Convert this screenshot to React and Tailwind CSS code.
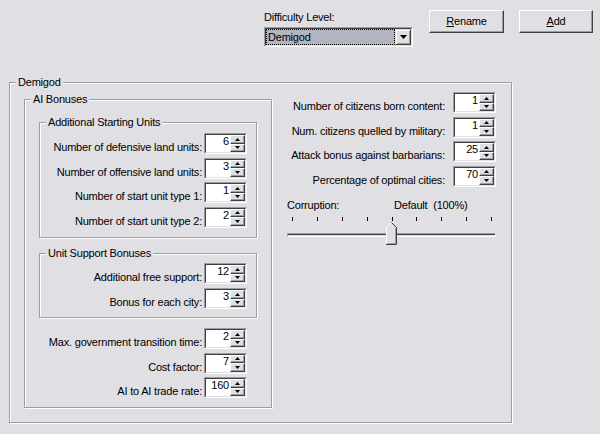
import React from "react";

function Arrow({ up }) {
  return (
    <svg width="5" height="3" viewBox="0 0 5 3" className="block">
      {up ? (
        <polygon points="2.5,0 5,3 0,3" fill="#000" />
      ) : (
        <polygon points="0,0 5,0 2.5,3" fill="#000" />
      )}
    </svg>
  );
}

function SpinBtn({ up }) {
  return (
    <div className="flex flex-1 items-center justify-center border border-t-white border-l-white border-b-[#404040] border-r-[#404040] bg-[#e0dfe3] shadow-[inset_-1px_-1px_0_#9d9da1]">
      <Arrow up={up} />
    </div>
  );
}

function Spin({ v }) {
  return (
    <div className="flex h-[21px] w-[43px] shrink-0 border border-t-[#9d9da1] border-l-[#9d9da1] border-b-white border-r-white">
      <div className="flex flex-1 border border-t-[#404040] border-l-[#404040] border-b-[#e0dfe3] border-r-[#e0dfe3] bg-white">
        <div className="flex-1 pr-[1px] pt-[1px] text-right leading-[11px]">{v}</div>
        <div className="flex w-[15px] flex-col">
          <SpinBtn up />
          <SpinBtn />
        </div>
      </div>
    </div>
  );
}

function Row({ label, v, gapClass }) {
  return (
    <div className={"flex h-[21px] items-end justify-end " + gapClass}>
      <span className="whitespace-nowrap leading-[13px]">{label}</span>
      <Spin v={v} />
    </div>
  );
}

function Legend({ children }) {
  return (
    <legend className="ml-[6px] bg-[#e0dfe3] px-[2px] leading-[13px]">{children}</legend>
  );
}

function Button({ children, className }) {
  return (
    <div
      className={
        "flex h-[23px] items-center justify-center border border-t-white border-l-white border-b-[#404040] border-r-[#404040] bg-[#e0dfe3] shadow-[inset_-1px_-1px_0_#9d9da1] " +
        className
      }
    >
      <span className="leading-[13px]">{children}</span>
    </div>
  );
}

export default function App() {
  const ticks = [0, 1, 2, 3, 4, 5, 6, 7, 8];
  return (
    <div className="h-[434px] w-[600px] overflow-hidden bg-[#e0dfe3] font-['Liberation_Sans',Arial,sans-serif] text-[11px] tracking-[-0.2px] text-black">
      {/* Top area */}
      <div className="flex h-[76px] pl-[264px] pt-[10px]">
        <div className="flex w-[149px] flex-col">
          <div className="mt-[1px] leading-[13px]">Difficulty Level:</div>
          <div className="mt-[3px] flex h-[20px] border border-t-[#9d9da1] border-l-[#9d9da1] border-b-white border-r-white">
            <div className="flex flex-1 border border-t-[#404040] border-l-[#404040] border-b-[#e0dfe3] border-r-[#e0dfe3] bg-white">
              <div className="flex flex-1 items-center border border-dotted border-black bg-[#b2b4c2] pl-[1px]">
                <span className="leading-[13px]">Demigod</span>
              </div>
              <div className="flex w-[16px] items-center justify-center border border-t-[#e0dfe3] border-l-[#e0dfe3] border-b-[#404040] border-r-[#404040] bg-[#e0dfe3] shadow-[inset_1px_1px_0_#fff,inset_-1px_-1px_0_#9d9da1]">
                <svg width="7" height="4" viewBox="0 0 7 4" className="block">
                  <polygon points="0,0 7,0 3.5,4" fill="#000" />
                </svg>
              </div>
            </div>
          </div>
        </div>
        <Button className="ml-[16px] w-[75px]">
          <span className="underline">R</span>ename
        </Button>
        <Button className="ml-[15px] w-[74px]">
          <span className="underline">A</span>dd
        </Button>
      </div>

      {/* Demigod group */}
      <fieldset className="ml-[9px] w-[503px] border border-[#9d9da1] shadow-[inset_1px_1px_0_#fff,1px_1px_0_#fff]">
        <Legend>Demigod</Legend>
        <div className="flex items-start pb-[14px] pl-[14px]">
          {/* AI Bonuses */}
          <fieldset className="mt-[4px] w-[248px] border border-[#9d9da1] shadow-[inset_1px_1px_0_#fff,1px_1px_0_#fff]">
            <Legend>AI Bonuses</Legend>
            <div className="flex flex-col pb-[9px] pl-[14px]">
              <fieldset className="mt-[10px] w-[218px] border border-[#9d9da1] shadow-[inset_1px_1px_0_#fff,1px_1px_0_#fff]">
                <Legend>Additional Starting Units</Legend>
                <div className="flex flex-col gap-[3.5px] pb-[9px] pr-[9px] pt-[4px]">
                  <Row label="Number of defensive land units:" v="6" gapClass="gap-[2px]" />
                  <Row label="Number of offensive land units:" v="3" gapClass="gap-[2px]" />
                  <Row label="Number of start unit type 1:" v="1" gapClass="gap-[2px]" />
                  <Row label="Number of start unit type 2:" v="2" gapClass="gap-[2px]" />
                </div>
              </fieldset>
              <fieldset className="mt-[9px] w-[218px] border border-[#9d9da1] shadow-[inset_1px_1px_0_#fff,1px_1px_0_#fff]">
                <Legend>Unit Support Bonuses</Legend>
                <div className="flex flex-col gap-[4px] pb-[8px] pr-[9px] pt-[3.5px]">
                  <Row label="Additional free support:" v="12" gapClass="gap-[2px]" />
                  <Row label="Bonus for each city:" v="3" gapClass="gap-[2px]" />
                </div>
              </fieldset>
              <div className="mt-[10px] flex w-[218px] flex-col gap-[3.5px] pr-[10px]">
                <Row label="Max. government transition time:" v="2" gapClass="gap-[2px]" />
                <Row label="Cost factor:" v="7" gapClass="gap-[2px]" />
                <Row label="AI to AI trade rate:" v="160" gapClass="gap-[2px]" />
              </div>
            </div>
          </fieldset>

          {/* Right column */}
          <div className="ml-[15px] mt-[3px] flex w-[209px] flex-col">
            <div className="flex flex-col gap-[3.5px]">
              <Row label="Number of citizens born content:" v="1" gapClass="gap-[8px]" />
              <Row label="Num. citizens quelled by military:" v="1" gapClass="gap-[8px]" />
              <Row label="Attack bonus against barbarians:" v="25" gapClass="gap-[8px]" />
              <Row label="Percentage of optimal cities:" v="70" gapClass="gap-[8px]" />
            </div>
            <div className="mt-[12px] flex leading-[13px]">
              <span className="w-[107px]">Corruption:</span>
              <span className="whitespace-pre">Default  (100%)</span>
            </div>
            <div className="mt-[5.5px] flex h-[4px] justify-between pl-[5px] pr-[4px]">
              {ticks.map((t) => (
                <div key={t} className="h-[4px] w-[1px] bg-black" />
              ))}
            </div>
            <div className="relative mt-[1px] h-[23px]">
              <div className="mt-[11px] h-[4px] border border-t-[#9d9da1] border-l-[#9d9da1] border-b-white border-r-white">
                <div className="h-[1px] bg-[#404040]" />
              </div>
              <svg
                width="11"
                height="23"
                viewBox="0 0 11 23"
                className="absolute left-[99px] top-0 block"
              >
                <polygon points="0.5,5.5 5.5,0.5 10.5,5.5 10.5,22.5 0.5,22.5" fill="#e0dfe3" />
                <polyline points="0.5,22 0.5,5.5 5.5,0.5" fill="none" stroke="#fff" />
                <polyline points="5.5,0.5 10.5,5.5 10.5,22.5 0,22.5" fill="none" stroke="#404040" />
                <polyline points="9.5,6 9.5,21.5 1,21.5" fill="none" stroke="#9d9da1" />
              </svg>
            </div>
          </div>
        </div>
      </fieldset>
    </div>
  );
}
